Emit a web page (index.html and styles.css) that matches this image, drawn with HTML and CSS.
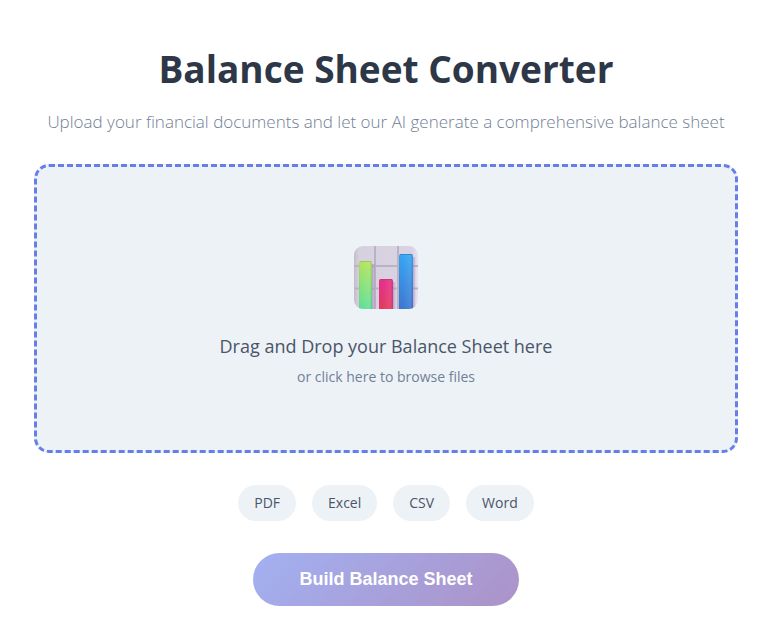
FILE: index.html
```html
<!DOCTYPE html>
<html lang="en">
<head>
<meta charset="utf-8">
<meta name="viewport" content="width=device-width, initial-scale=1">
<title>Balance Sheet Converter</title>
<link rel="stylesheet" href="styles.css">
</head>
<body>
<main class="converter">
  <h1 class="title">Balance Sheet Converter</h1>
  <p class="subtitle">Upload your financial documents and let our AI generate a comprehensive balance sheet</p>
  <label class="dropzone">
    <input class="file-input" type="file" accept=".pdf,.xls,.xlsx,.csv,.doc,.docx">
    <svg class="chart-icon" viewBox="0 0 64 64" aria-hidden="true">
      <defs>
        <linearGradient id="green" x1="0" y1="0" x2="0" y2="1"><stop offset="0" stop-color="#b4e45c"/><stop offset="1" stop-color="#5fe096"/></linearGradient>
        <linearGradient id="red" x1="0" y1="0" x2="0" y2="1"><stop offset="0" stop-color="#e62d8c"/><stop offset="1" stop-color="#e2385f"/></linearGradient>
        <linearGradient id="blue" x1="0" y1="0" x2="0" y2="1"><stop offset="0" stop-color="#34a5f5"/><stop offset="1" stop-color="#3c76cf"/></linearGradient>
        <linearGradient id="shade"><stop offset="0" stop-color="#403070" stop-opacity=".08"/><stop offset=".2" stop-color="#fff" stop-opacity="0"/><stop offset=".8" stop-color="#fff" stop-opacity=".1"/><stop offset="1" stop-color="#403070" stop-opacity=".15"/></linearGradient>
        <linearGradient id="shadow"><stop offset="0" stop-color="#9c88b4" stop-opacity=".6"/><stop offset="1" stop-color="#9c88b4" stop-opacity="0"/></linearGradient>
        <linearGradient id="tile"><stop offset="0" stop-color="#c3bdcb"/><stop offset=".08" stop-color="#d6d0df"/><stop offset=".9" stop-color="#d9d2e2"/><stop offset="1" stop-color="#e9e2f1"/></linearGradient>
        <clipPath id="frame"><rect width="64" height="63" rx="9"/></clipPath>
      </defs>
      <g clip-path="url(#frame)">
        <rect width="64" height="63" fill="url(#tile)"/>
        <path d="M21 0v63M44 0v63M0 20h64M0 42.500h64" stroke="#bab3c4" stroke-width="2" fill="none"/>
        <rect x="18" y="18" width="4" height="45" fill="url(#shadow)"/>
        <rect x="39" y="36" width="3" height="27" fill="url(#shadow)"/>
        <rect x="59" y="11" width="3" height="52" fill="url(#shadow)"/>
        <path d="M5 63V17q0-2 2-2h9q2 0 2 2v46z" fill="url(#green)"/>
        <path d="M5 63V17q0-2 2-2h9q2 0 2 2v46z" fill="url(#shade)"/>
        <path d="M25 63V35q0-2 2-2h10q2 0 2 2v28z" fill="url(#red)"/>
        <path d="M25 63V35q0-2 2-2h10q2 0 2 2v28z" fill="url(#shade)"/>
        <path d="M45 63V10q0-2 2-2h10q2 0 2 2v53z" fill="url(#blue)"/>
        <path d="M45 63V10q0-2 2-2h10q2 0 2 2v53z" fill="url(#shade)"/>
        <path d="M6 15.500h11" stroke="#98cb4f" stroke-width="1"/>
        <path d="M26 33.500h12" stroke="#c83680" stroke-width="1"/>
        <path d="M46 8.500h12" stroke="#3487cf" stroke-width="1"/>
      </g>
    </svg>
    <span class="drop-text">Drag and Drop your Balance Sheet here</span>
    <span class="drop-hint">or click here to browse files</span>
  </label>
  <ul class="formats">
    <li class="format">PDF</li>
    <li class="format">Excel</li>
    <li class="format">CSV</li>
    <li class="format">Word</li>
  </ul>
  <button class="build" type="button">Build Balance Sheet</button>
</main>
</body>
</html>
```
FILE: styles.css
```css
* {
  box-sizing: border-box;
}

body {
  margin: 0;
  background: #fff;
  font-family: "Segoe UI", "Open Sans", "Noto Sans", sans-serif;
}

.converter {
  display: flex;
  flex-direction: column;
  align-items: center;
  padding: 42px 31px 0 34px;
  text-align: center;
}

.title {
  margin: 0 0 14px;
  color: #2d3748;
  font-size: 37px;
  font-weight: 700;
  line-height: 54px;
}

.subtitle {
  margin: 0 0 30px;
  color: #718096;
  font-size: 17px;
  font-weight: 300;
  line-height: 24px;
}

.dropzone {
  display: flex;
  flex-direction: column;
  align-items: center;
  align-self: stretch;
  padding: 79px 32px 61px;
  border: 3px dashed #667eea;
  border-radius: 15px;
  background: #edf2f7;
  cursor: pointer;
}

.file-input {
  position: absolute;
  width: 1px;
  height: 1px;
  opacity: 0;
}

.chart-icon {
  width: 64px;
  height: 64px;
  margin-bottom: 24px;
}

.drop-text {
  margin-bottom: 7px;
  color: #4a5568;
  font-size: 18px;
  line-height: 24px;
}

.drop-hint {
  color: #718096;
  font-size: 14px;
  line-height: 24px;
}

.formats {
  display: flex;
  flex-wrap: wrap;
  justify-content: center;
  gap: 16px;
  margin: 32px 0;
  padding: 0;
  list-style: none;
}

.format {
  padding: 8px 16px;
  border-radius: 20px;
  background: #edf2f7;
  color: #4a5568;
  font-size: 14px;
  line-height: 20px;
}

.build {
  padding: 16px 46px;
  border: 0;
  border-radius: 50px;
  background: linear-gradient(135deg, #667eea 0%, #764ba2 100%);
  color: #fff;
  font-family: "Liberation Sans", Arial, sans-serif;
  font-size: 18px;
  font-weight: 700;
  line-height: 21px;
  opacity: 0.6;
}
```
